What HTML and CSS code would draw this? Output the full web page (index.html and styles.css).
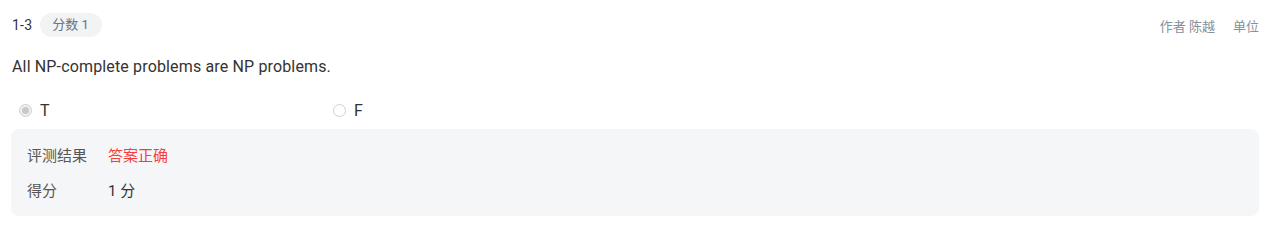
FILE: index.html
```html
<!DOCTYPE html>
<html lang="zh-CN">
<head>
<meta charset="utf-8">
<link rel="stylesheet" href="styles.css">
</head>
<body>
<div class="problem">
  <div class="header">
    <div class="left">
      <span class="num">1-3</span>
      <span class="pill">分数 1</span>
    </div>
    <div class="right">
      <span>作者 陈越</span>
      <span>单位</span>
    </div>
  </div>
  <div class="question">All NP-complete problems are NP problems.</div>
  <div class="options">
    <label class="opt"><span class="radio checked"></span><span class="opt-text">T</span></label>
    <label class="opt"><span class="radio"></span><span class="opt-text">F</span></label>
  </div>
  <div class="result">
    <div class="row">
      <span class="key">评测结果</span>
      <span class="val ok">答案正确</span>
    </div>
    <div class="row">
      <span class="key">得分</span>
      <span class="val">1 分</span>
    </div>
  </div>
</div>
</body>
</html>
```

FILE: styles.css
```css
* { box-sizing: border-box; }
html, body { margin: 0; padding: 0; background: #fff; }
body {
  font-family: Roboto, "Noto Sans CJK SC", sans-serif;
  color: #1f2329;
}
.problem {
  padding: 13px 11px 0 11px;
  width: 1270px;
}
.header {
  display: flex;
  justify-content: space-between;
  align-items: center;
  height: 24px;
}
.left { display: flex; align-items: center; gap: 8px; }
.num { font-size: 14px; color: #333; padding-left: 1px; letter-spacing: 0.2px; }
.pill {
  background: #f2f3f5;
  color: #6b7280;
  font-size: 13px;
  height: 24px;
  line-height: 24px;
  padding: 0 13px 0 12px;
  border-radius: 12px;
}
.right {
  display: flex;
  gap: 18px;
  font-size: 13px;
  color: #86909c;
}
.question {
  margin-top: 20px;
  font-size: 16px;
  line-height: 20px;
  color: #333;
  padding-left: 1px;
  letter-spacing: 0.15px;
}
.options {
  display: grid;
  grid-template-columns: 314px 314px;
  margin-top: 23px;
  padding-left: 8px;
  height: 20px;
  align-items: center;
}
.opt { display: flex; align-items: center; gap: 8px; }
.radio {
  width: 13px;
  height: 13px;
  border-radius: 50%;
  border: 1px solid #d0d0d0;
  background: #fff;
  display: inline-flex;
  align-items: center;
  justify-content: center;
}
.radio.checked { border-color: #cfcfcf; background: #f0f0f0; }
.radio.checked::after {
  content: "";
  width: 7px;
  height: 7px;
  border-radius: 50%;
  background: #c8c8c8;
}
.opt-text { font-size: 16px; color: #333; }
.result {
  margin-top: 9px;
  width: 1248px;
  background: #f5f6f8;
  border-radius: 8px;
  padding: 15px 16px 17px 16px;
}
.row {
  display: flex;
  align-items: center;
  height: 20px;
  font-size: 15px;
}
.row + .row { margin-top: 15px; }
.key { width: 81px; color: #555; }
.val { color: #333; }
.val.ok { color: #f53f3f; }
```
